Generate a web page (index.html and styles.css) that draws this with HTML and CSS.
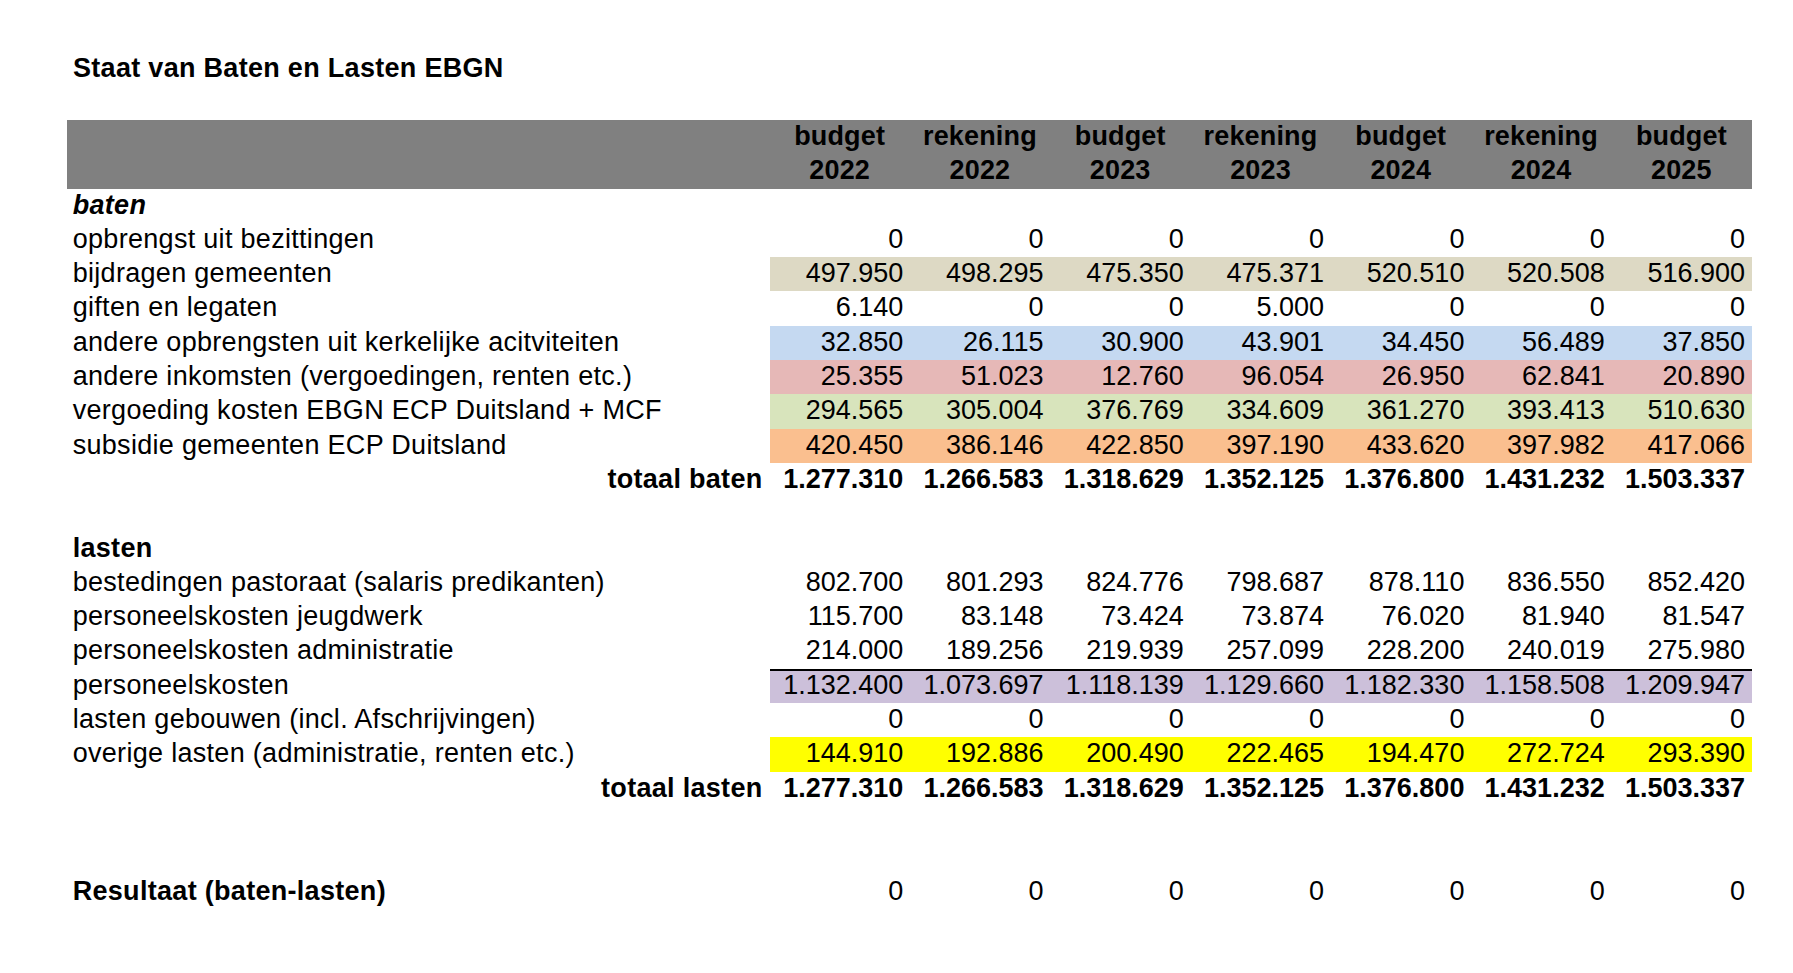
FILE: index.html
```html
<!DOCTYPE html>
<html lang="nl">
<head>
<meta charset="utf-8">
<title>Staat van Baten en Lasten EBGN</title>
<link rel="stylesheet" href="styles.css">
</head>
<body>
<div class="page">
  <h1 class="title">Staat van Baten en Lasten EBGN</h1>
  <table class="sheet">
    <colgroup>
      <col class="c-label">
      <col class="c-num"><col class="c-num"><col class="c-num"><col class="c-num"><col class="c-num"><col class="c-num"><col class="c-num">
    </colgroup>
    <thead>
      <tr class="head">
        <th></th>
        <th><div class="hl">budget</div><div class="hl">2022</div></th>
        <th><div class="hl">rekening</div><div class="hl">2022</div></th>
        <th><div class="hl">budget</div><div class="hl">2023</div></th>
        <th><div class="hl">rekening</div><div class="hl">2023</div></th>
        <th><div class="hl">budget</div><div class="hl">2024</div></th>
        <th><div class="hl">rekening</div><div class="hl">2024</div></th>
        <th><div class="hl">budget</div><div class="hl">2025</div></th>
      </tr>
    </thead>
    <tbody>
      <tr><td class="lbl section italic">baten</td><td></td><td></td><td></td><td></td><td></td><td></td><td></td></tr>
      <tr><td class="lbl">opbrengst uit bezittingen</td><td>0</td><td>0</td><td>0</td><td>0</td><td>0</td><td>0</td><td>0</td></tr>
      <tr class="bg-tan"><td class="lbl">bijdragen gemeenten</td><td>497.950</td><td>498.295</td><td>475.350</td><td>475.371</td><td>520.510</td><td>520.508</td><td>516.900</td></tr>
      <tr><td class="lbl">giften en legaten</td><td>6.140</td><td>0</td><td>0</td><td>5.000</td><td>0</td><td>0</td><td>0</td></tr>
      <tr class="bg-blue"><td class="lbl">andere opbrengsten uit kerkelijke acitviteiten</td><td>32.850</td><td>26.115</td><td>30.900</td><td>43.901</td><td>34.450</td><td>56.489</td><td>37.850</td></tr>
      <tr class="bg-red"><td class="lbl">andere inkomsten (vergoedingen, renten etc.)</td><td>25.355</td><td>51.023</td><td>12.760</td><td>96.054</td><td>26.950</td><td>62.841</td><td>20.890</td></tr>
      <tr class="bg-green"><td class="lbl">vergoeding kosten EBGN ECP Duitsland + MCF</td><td>294.565</td><td>305.004</td><td>376.769</td><td>334.609</td><td>361.270</td><td>393.413</td><td>510.630</td></tr>
      <tr class="bg-orange"><td class="lbl">subsidie gemeenten ECP Duitsland</td><td>420.450</td><td>386.146</td><td>422.850</td><td>397.190</td><td>433.620</td><td>397.982</td><td>417.066</td></tr>
      <tr class="total"><td class="lbl right">totaal baten</td><td>1.277.310</td><td>1.266.583</td><td>1.318.629</td><td>1.352.125</td><td>1.376.800</td><td>1.431.232</td><td>1.503.337</td></tr>
      <tr><td class="lbl"></td><td></td><td></td><td></td><td></td><td></td><td></td><td></td></tr>
      <tr><td class="lbl section">lasten</td><td></td><td></td><td></td><td></td><td></td><td></td><td></td></tr>
      <tr><td class="lbl">bestedingen pastoraat (salaris predikanten)</td><td>802.700</td><td>801.293</td><td>824.776</td><td>798.687</td><td>878.110</td><td>836.550</td><td>852.420</td></tr>
      <tr><td class="lbl">personeelskosten jeugdwerk</td><td>115.700</td><td>83.148</td><td>73.424</td><td>73.874</td><td>76.020</td><td>81.940</td><td>81.547</td></tr>
      <tr><td class="lbl">personeelskosten administratie</td><td>214.000</td><td>189.256</td><td>219.939</td><td>257.099</td><td>228.200</td><td>240.019</td><td>275.980</td></tr>
      <tr class="bg-purple"><td class="lbl">personeelskosten</td><td>1.132.400</td><td>1.073.697</td><td>1.118.139</td><td>1.129.660</td><td>1.182.330</td><td>1.158.508</td><td>1.209.947</td></tr>
      <tr><td class="lbl">lasten gebouwen (incl. Afschrijvingen)</td><td>0</td><td>0</td><td>0</td><td>0</td><td>0</td><td>0</td><td>0</td></tr>
      <tr class="bg-yellow"><td class="lbl">overige lasten (administratie, renten etc.)</td><td>144.910</td><td>192.886</td><td>200.490</td><td>222.465</td><td>194.470</td><td>272.724</td><td>293.390</td></tr>
      <tr class="total"><td class="lbl right">totaal lasten</td><td>1.277.310</td><td>1.266.583</td><td>1.318.629</td><td>1.352.125</td><td>1.376.800</td><td>1.431.232</td><td>1.503.337</td></tr>
      <tr><td class="lbl"></td><td></td><td></td><td></td><td></td><td></td><td></td><td></td></tr>
      <tr><td class="lbl"></td><td></td><td></td><td></td><td></td><td></td><td></td><td></td></tr>
      <tr><td class="lbl section">Resultaat (baten-lasten)</td><td>0</td><td>0</td><td>0</td><td>0</td><td>0</td><td>0</td><td>0</td></tr>
    </tbody>
  </table>
</div>
</body>
</html>
```
FILE: styles.css
```css
html, body {
  margin: 0;
  padding: 0;
  background: #ffffff;
}

body {
  font-family: "Liberation Sans", Arial, sans-serif;
  font-size: 27px;
  color: #000000;
}

.page {
  padding: 54.3px 0 0 67px;
}

.title {
  margin: 0 0 36.4px 0;
  padding-left: 6px;
  font-size: 27px;
  font-weight: bold;
  letter-spacing: 0.3px;
  line-height: 29.3px;
  height: 29.3px;
}

.sheet {
  table-layout: fixed;
  border-collapse: collapse;
  border-spacing: 0;
  width: 1684.5px;
}

.c-label { width: 702.5px; }
.c-num { width: 140.29px; }

.sheet th,
.sheet td {
  padding: 0 6.5px 2px 6.5px;
  height: 32.3px;
  line-height: 32.3px;
  vertical-align: bottom;
  white-space: nowrap;
  text-align: right;
  font-weight: normal;
  overflow: visible;
}

.sheet .lbl {
  text-align: left;
  padding-left: 5.7px;
  letter-spacing: 0.3px;
}

.sheet .lbl.right {
  text-align: right;
  padding-right: 7px;
}

.sheet .head th {
  background: #808080;
  padding: 0;
  height: 68.6px;
  vertical-align: top;
  text-align: center;
  font-weight: bold;
  letter-spacing: 0.15px;
}

.hl {
  height: 34.3px;
  line-height: 32.3px;
}

.sheet .section { font-weight: bold; }
.sheet .italic { font-style: italic; }

.sheet .total td { font-weight: bold; }

.bg-tan td:not(.lbl) { background: #ddd9c4; }
.bg-blue td:not(.lbl) { background: #c5d9f1; }
.bg-red td:not(.lbl) { background: #e6b8b7; }
.bg-green td:not(.lbl) { background: #d8e4bc; }
.bg-orange td:not(.lbl) { background: #fabf8f; }
.bg-yellow td:not(.lbl) { background: #ffff00; }

.sheet .bg-purple td:not(.lbl) {
  background: #ccc0da;
  box-shadow: inset 0 2px 0 #000000;
}
```
